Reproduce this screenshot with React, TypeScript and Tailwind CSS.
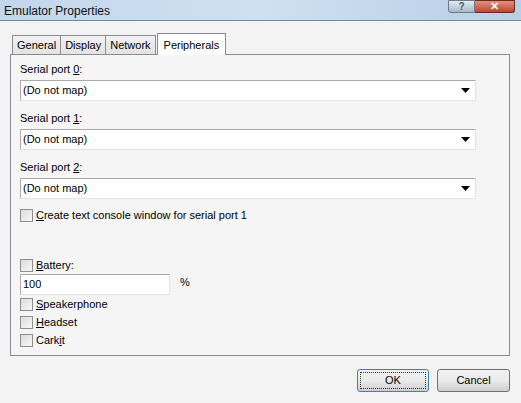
import { useState } from 'react';

const font = { fontFamily: '"Liberation Sans", Arial, sans-serif' };

function Accel({ text, index }: { text: string; index: number }) {
  return (
    <>
      {text.slice(0, index)}
      <span className="underline underline-offset-1">{text[index]}</span>
      {text.slice(index + 1)}
    </>
  );
}

function Check({ label, accel }: { label: string; accel: number }) {
  return (
    <div className="flex items-center h-[18px]">
      <div className="w-[13px] h-[13px] border border-[#8e8f8f] bg-gradient-to-br from-[#dcdcdc] to-[#f7f7f7] mr-[3px]" />
      <span>
        <Accel text={label} index={accel} />
      </span>
    </div>
  );
}

function Combo({ label, accel }: { label: string; accel: number }) {
  return (
    <div className="flex flex-col">
      <div className="h-[15px] leading-[15px] mb-[3px]">
        <Accel text={label} index={accel} />
      </div>
      <div className="w-[456px] h-[21px] bg-white border border-[#ababab] border-b-[#e3e3e3] border-r-[#e3e3e3] flex items-center justify-between pl-[2px] pr-[5px]">
        <span>(Do not map)</span>
        <svg width="9" height="5" viewBox="0 0 9 5">
          <path d="M0 0h9L4.5 5z" fill="#000" />
        </svg>
      </div>
    </div>
  );
}

export default function App() {
  const [tab] = useState('Peripherals');
  const tabs = ['General', 'Display', 'Network', 'Peripherals'];

  return (
    <div className="w-[521px] h-[403px] bg-[#f3f3f3] text-[11px] text-black overflow-hidden flex flex-col" style={font}>
      <div className="h-[21px] flex items-start justify-between bg-gradient-to-r from-[#c3d7ec] via-[#cfe0f1] to-[#b8cfe6] border-b border-[#6d8aa8]">
        <div className="text-[12px] pl-[4px] pt-[2px] text-[#111]">Emulator Properties</div>
        <div className="flex mr-[6px]">
          <div className="w-[27px] h-[13px] rounded-bl-[3px] border border-[#6b7b8e] bg-gradient-to-b from-[#e4ebf2] to-[#a9b8c8] flex items-center justify-center text-[10px] font-bold text-[#4a5868] leading-none">
            ?
          </div>
          <div className="w-[40px] h-[13px] rounded-br-[3px] border border-l-0 border-[#6e2a20] bg-gradient-to-b from-[#e0917f] to-[#c3402c] flex items-center justify-center text-white text-[11px] font-bold leading-none">
            ✕
          </div>
        </div>
      </div>

      <div className="pl-[10px] pr-[11px] pt-[11px]">
        <div className="flex items-end h-[22px] pl-[2px]">
          {tabs.map((t) => {
            const sel = t === tab;
            return (
              <div
                key={t}
                className={
                  sel
                    ? 'h-[22px] px-[6px] bg-white border border-b-0 border-[#898c95] -mb-px relative z-10 flex items-start pt-[3px] ml-px'
                    : 'h-[19px] px-[4px] bg-gradient-to-b from-[#f2f2f2] to-[#e3e3e3] border border-[#898c95] border-b-0 flex items-center -ml-px first:ml-0'
                }
              >
                {t}
              </div>
            );
          })}
        </div>
        <div className="h-[302px] border border-[#898c95] bg-[#f5f5f5] pl-[9px] pt-[7px] flex flex-col">
          <div className="flex flex-col gap-[10px]">
            <Combo label="Serial port 0:" accel={12} />
            <Combo label="Serial port 1:" accel={12} />
            <Combo label="Serial port 2:" accel={12} />
          </div>
          <div className="mt-[7px]">
            <Check label="Create text console window for serial port 1" accel={0} />
          </div>
          <div className="mt-[32px]">
            <Check label="Battery:" accel={0} />
          </div>
          <div className="flex items-center">
            <div className="w-[150px] h-[21px] bg-white border border-[#ababab] border-b-[#e3e3e3] border-r-[#e3e3e3] flex items-center pl-[2px]">
              100
            </div>
            <span className="ml-[10px] -mt-[4px]">%</span>
          </div>
          <div>
            <Check label="Speakerphone" accel={0} />
            <Check label="Headset" accel={0} />
            <Check label="Carkit" accel={4} />
          </div>
        </div>
      </div>

      <div className="flex justify-end gap-[8px] pr-[11px] pt-[13px]">
        <div className="w-[72px] h-[23px] rounded-[3px] border border-[#3c7fb1] bg-gradient-to-b from-[#f2f2f2] via-[#ebebeb] to-[#cfcfcf] p-[2px]">
          <div className="w-full h-full border border-dotted border-[#333] flex items-center justify-center">OK</div>
        </div>
        <div className="w-[73px] h-[23px] rounded-[3px] border border-[#707070] bg-gradient-to-b from-[#f2f2f2] via-[#ebebeb] to-[#cfcfcf] flex items-center justify-center">
          Cancel
        </div>
      </div>
    </div>
  );
}
